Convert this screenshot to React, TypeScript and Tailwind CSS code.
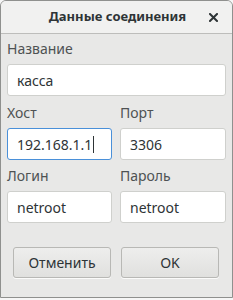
import React from 'react';

function Field({ label, value, focused, className }: { label: string; value: string; focused?: boolean; className?: string }) {
  return (
    <div className={className}>
      <div className="h-[20px] leading-[20px] text-[14px] text-[#4e5253]">{label}</div>
      <div
        className={`mt-[5px] h-[32px] rounded-[3px] bg-white flex items-center pl-[9px] text-[14px] text-[#2e3436] border ${
          focused ? 'border-[#4a90d9]' : 'border-[#cfd0cd]'
        }`}
      >
        <span>{value}</span>
        {focused && <span className="ml-[1px] w-[1px] h-[17px] bg-[#2e3436]" />}
      </div>
    </div>
  );
}

export default function App() {
  return (
    <div className="w-[233px] h-[300px] bg-[#f6f6f6]" style={{ fontFamily: '"Noto Sans", "Open Sans", sans-serif' }}>
      <div className="w-[233px] h-[298px] flex flex-col border border-[#8f908e] rounded-t-[6px] overflow-hidden bg-[#e8e8e7]">
        {/* Title bar */}
        <div className="h-[33px] shrink-0 bg-[#f1f1f0] border-b border-[#bdbdbb] flex items-center relative">
          <div className="flex-1 text-center text-[13px] font-bold text-[#2e3436] pl-[2px]">Данные соединения</div>
          <svg className="absolute right-[14px] top-[12px]" width="9" height="9" viewBox="0 0 9 9">
            <path d="M1 1 L8 8 M8 1 L1 8" stroke="#2e3436" strokeWidth="2" strokeLinecap="square" />
          </svg>
        </div>

        {/* Body */}
        <div className="flex-1 flex flex-col px-[6px] pt-[5px]">
          <Field label="Название" value="касса" />
          <div className="mt-[7px] grid grid-cols-[105px_106px] gap-x-[8px]">
            <Field label="Хост" value="192.168.1.1" focused />
            <Field label="Порт" value="3306" />
          </div>
          <div className="mt-[6px] grid grid-cols-[105px_106px] gap-x-[8px]">
            <Field label="Логин" value="netroot" />
            <Field label="Пароль" value="netroot" />
          </div>

          <div className="mt-[24px] flex gap-[10px] pl-[6px]">
            <button className="w-[98px] h-[31px] rounded-[3px] border border-[#b8b8b5] bg-gradient-to-b from-[#eeeeed] to-[#e0e0de] text-[14px] text-[#2e3436] shadow-[0_1px_0_rgba(255,255,255,0.8)]">
              Отменить
            </button>
            <button className="w-[98px] h-[31px] rounded-[3px] border border-[#b8b8b5] bg-gradient-to-b from-[#eeeeed] to-[#e0e0de] text-[14px] text-[#2e3436] shadow-[0_1px_0_rgba(255,255,255,0.8)]">
              OK
            </button>
          </div>
        </div>
      </div>
    </div>
  );
}
